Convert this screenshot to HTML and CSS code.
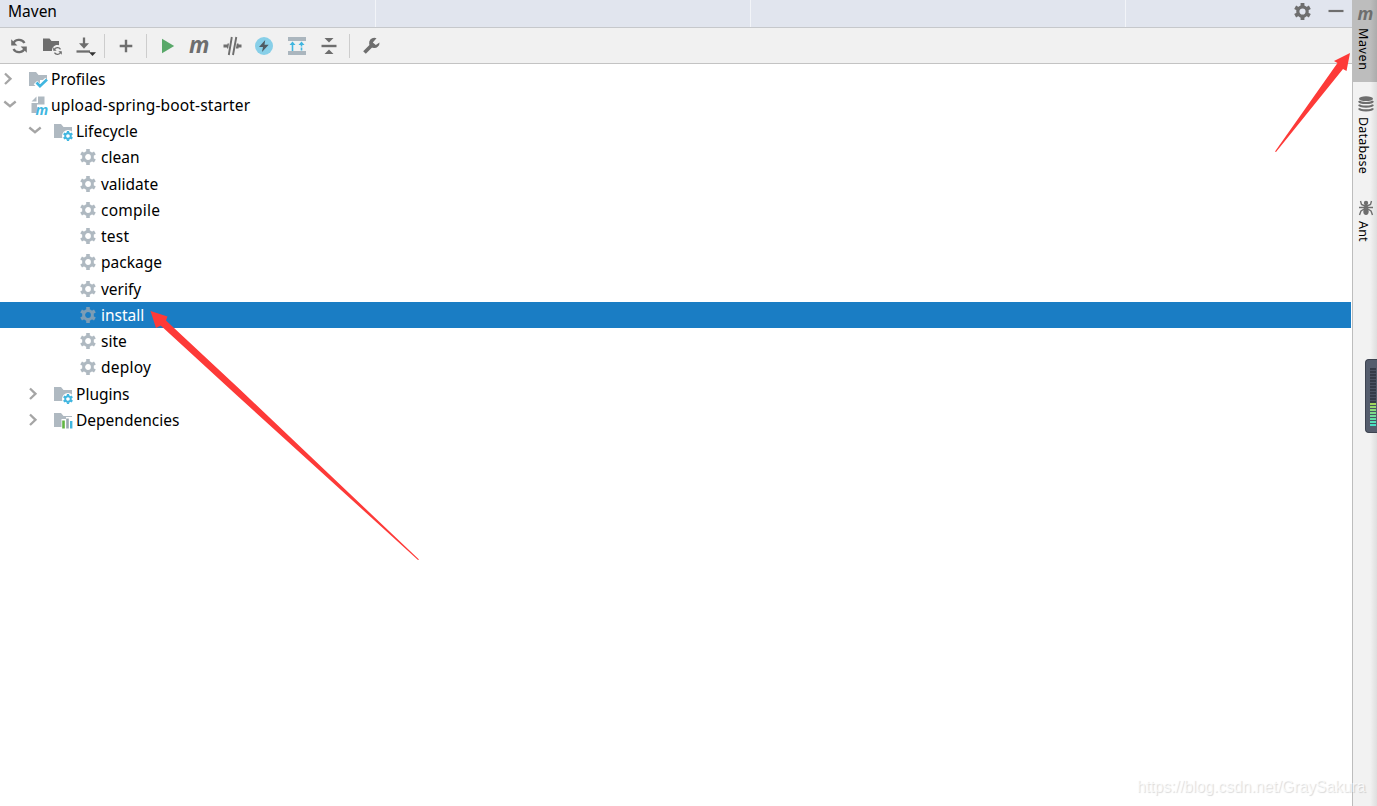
FILE: index.html
```html
<!DOCTYPE html>
<html lang="en">
<head>
    <meta charset="UTF-8">
    <meta name="viewport" content="width=device-width, initial-scale=1.0">
    <title>Maven</title>
    <link rel="stylesheet" href="styles.css">
</head>
<body>
    <!-- Shared icons -->
    <svg class="sprite" width="0" height="0">
        <symbol id="gear" viewBox="0 0 16 16">
            <circle cx="8" cy="8" r="4.4" fill="none" stroke="currentColor" stroke-width="3"/>
            <path d="M8 0v3M8 13v3M1.1 4l2.6 1.5M12.3 10.5l2.6 1.5M14.9 4l-2.6 1.5M3.7 10.5L1.1 12" stroke="currentColor" stroke-width="3.6"/>
        </symbol>
        <symbol id="folder" viewBox="0 0 20 20">
            <path d="M1 3h7l2.5 3H19v5h-7v6H1z" fill="currentColor"/>
        </symbol>
        <symbol id="right" viewBox="0 0 20 20">
            <path d="M5 4.5l5.5 5.3L5 15" fill="none" stroke="currentColor" stroke-width="2.3"/>
        </symbol>
        <symbol id="down" viewBox="0 0 20 20">
            <path d="M4.3 6.5l5.7 4.7 5.7-4.7" fill="none" stroke="currentColor" stroke-width="2.3"/>
        </symbol>
        <symbol id="sync" viewBox="0 0 20 20">
            <path d="M4 8.3A6.3 6.3 0 0 1 15.5 7M16 11.7A6.3 6.3 0 0 1 4.5 13" fill="none" stroke="currentColor" stroke-width="2.3"/>
            <path d="M2.2 3.2v6.2h6.2zM17.8 16.8v-6.2h-6.2z" fill="currentColor"/>
        </symbol>
    </svg>

    <div class="window">
        <div class="main">
            <div class="titlebar">
                <div class="title-part">Maven</div>
                <div class="title-part"></div>
                <div class="title-part"></div>
                <div class="title-part title-actions">
                    <svg width="17" height="17"><use href="#gear"/></svg>
                    <svg width="16" height="16"><path d="M0.5 8h15" stroke="currentColor" stroke-width="2.2"/></svg>
                </div>
            </div>

            <div class="toolbar">
                <div class="group group-first">
                    <svg class="icon"><use href="#sync"/></svg>
                    <svg class="icon" viewBox="0 0 20 20">
                        <path d="M1 2.5h6.5l2 2.5H17v4.3c-4-1-7 1.7-7 5.7H1z" fill="currentColor"/>
                        <use href="#sync" x="10" y="9.5" width="11" height="11"/>
                    </svg>
                    <svg class="icon" viewBox="0 0 20 20">
                        <path d="M9 1.5v8" stroke="currentColor" stroke-width="2.3"/>
                        <path d="M4 7.2h10L9 12.7z" fill="currentColor"/>
                        <path d="M1.5 15.5H15" stroke="currentColor" stroke-width="2.3"/>
                        <path d="M14 16.2h7L17.5 20z" fill="#333"/>
                    </svg>
                </div>
                <div class="separator sep-first"></div>
                <svg class="icon" viewBox="0 0 20 20"><path d="M10 3.7v12.6M3.7 10h12.6" stroke="currentColor" stroke-width="2.4"/></svg>
                <div class="separator sep-run"></div>
                <div class="group group-run">
                    <svg class="icon run" viewBox="0 0 20 20"><path d="M4 2.8v14.4L16.2 10z" fill="currentColor"/></svg>
                    <svg class="icon" viewBox="0 0 20 20"><text class="m-icon" x="-1" y="17" font-size="22.5">m</text></svg>
                    <svg class="icon" viewBox="0 0 20 20">
                        <path d="M0.5 10H7M12 10h6.5" stroke="currentColor" stroke-width="3"/>
                        <path d="M4.5 7.5h3v5H4zM13 7.5h2.5v5H12z" fill="currentColor"/>
                        <path d="M8.8 1l-3 18M13.3 1L10 19" stroke="#f1f1f1" stroke-width="3.4"/>
                        <path d="M8.8 1l-3 18M13.3 1L10 19" stroke="currentColor" stroke-width="1.9"/>
                    </svg>
                    <svg class="icon" viewBox="0 0 20 20">
                        <circle cx="9" cy="10" r="9" fill="#87cfe8"/>
                        <path d="M10.2 4L4 10.900h4L7 16l6.700-7.300H9.500z" fill="#4f5b62"/>
                    </svg>
                    <svg class="icon" viewBox="0 0 20 20">
                        <path d="M1 3h18M1 17h18" stroke="#abb6be" stroke-width="3.8"/>
                        <path d="M5.5 7.5V15" stroke="#40b6e0" stroke-width="1.6"/>
                        <path d="M14.5 7.5V15" stroke="#40b6e0" stroke-width="1.6" stroke-dasharray="3 1"/>
                        <path d="M2.5 9l3-3.500 3 3.500zM11.500 9l3-3.500 3 3.500z" fill="#40b6e0"/>
                    </svg>
                    <svg class="icon" viewBox="0 0 20 20">
                        <path d="M2.5 10h15" stroke="currentColor" stroke-width="2.4"/>
                        <path d="M5.5 2h9L10 6.5zM5.5 18h9L10 13.5z" fill="currentColor"/>
                    </svg>
                </div>
                <div class="separator sep-settings"></div>
                <svg class="icon" viewBox="0 0 20 20">
                    <path d="M3.5 16.5L12 8" stroke="currentColor" stroke-width="3.8"/>
                    <path d="M15.5 2.2a5.2 5.2 0 1 0 3 4.3L14.8 9l-3-2.500z" fill="currentColor"/>
                </svg>
            </div>

            <div class="tree">
                <div class="row">
                    <svg class="arrow"><use href="#right"/></svg>
                    <svg class="node" viewBox="0 0 20 20">
                        <use href="#folder"/>
                        <path d="M7.5 13.5l4 4L19 10.5" fill="none" stroke="#fff" stroke-width="5"/>
                        <path d="M8.5 13.5l3.500 3.700 7-6.700" fill="none" stroke="#40b6e0" stroke-width="2.7"/>
                    </svg>
                    <span>Profiles</span>
                </div>
                <div class="row">
                    <svg class="arrow"><use href="#down"/></svg>
                    <svg class="node" viewBox="0 0 20 20">
                        <path d="M8.5 1.5v5h-5zM10 1.5h6.500v8H9v8.500H3.500V8H10z" fill="currentColor"/>
                        <text class="m-icon m-blue" x="7.5" y="19.5" font-size="14">m</text>
                    </svg>
                    <span class="project">upload-spring-boot-starter</span>
                </div>
                <div class="row level-1">
                    <svg class="arrow"><use href="#down"/></svg>
                    <svg class="node" viewBox="0 0 20 20">
                        <use href="#folder"/>
                        <circle cx="15" cy="15" r="6" fill="#fff"/>
                        <use class="blue" href="#gear" x="10" y="10" width="10" height="10"/>
                    </svg>
                    <span>Lifecycle</span>
                </div>
                <div class="row level-2"><svg class="node" viewBox="-2 -2 20 20"><use href="#gear" width="16" height="16"/></svg><span>clean</span></div>
                <div class="row level-2"><svg class="node" viewBox="-2 -2 20 20"><use href="#gear" width="16" height="16"/></svg><span>validate</span></div>
                <div class="row level-2"><svg class="node" viewBox="-2 -2 20 20"><use href="#gear" width="16" height="16"/></svg><span class="wide">compile</span></div>
                <div class="row level-2"><svg class="node" viewBox="-2 -2 20 20"><use href="#gear" width="16" height="16"/></svg><span class="wide">test</span></div>
                <div class="row level-2"><svg class="node" viewBox="-2 -2 20 20"><use href="#gear" width="16" height="16"/></svg><span>package</span></div>
                <div class="row level-2"><svg class="node" viewBox="-2 -2 20 20"><use href="#gear" width="16" height="16"/></svg><span>verify</span></div>
                <div class="row level-2 selected"><svg class="node" viewBox="-2 -2 20 20"><use href="#gear" width="16" height="16"/></svg><span>install</span></div>
                <div class="row level-2"><svg class="node" viewBox="-2 -2 20 20"><use href="#gear" width="16" height="16"/></svg><span>site</span></div>
                <div class="row level-2"><svg class="node" viewBox="-2 -2 20 20"><use href="#gear" width="16" height="16"/></svg><span class="wide">deploy</span></div>
                <div class="row level-1">
                    <svg class="arrow"><use href="#right"/></svg>
                    <svg class="node" viewBox="0 0 20 20">
                        <use href="#folder"/>
                        <circle cx="15" cy="15" r="6" fill="#fff"/>
                        <use class="blue" href="#gear" x="10" y="10" width="10" height="10"/>
                    </svg>
                    <span>Plugins</span>
                </div>
                <div class="row level-1">
                    <svg class="arrow"><use href="#right"/></svg>
                    <svg class="node" viewBox="0 0 20 20">
                        <use href="#folder"/>
                        <path d="M8.5 9H13V7h7v11.500H8.500z" fill="#fff"/>
                        <path d="M10.500 10.500v8" stroke="#62b543" stroke-width="2.6"/>
                        <path d="M14.500 8.500v10" stroke="#9aa7b0" stroke-width="2.6"/>
                        <path d="M18.200 11v7.500" stroke="#40b6e0" stroke-width="2.4"/>
                    </svg>
                    <span>Dependencies</span>
                </div>
            </div>
        </div>

        <div class="stripe">
            <div class="tab tab-active">
                <svg class="tab-icon" viewBox="0 0 18 18"><text class="m-icon" x="0.5" y="15" font-size="17.5">m</text></svg>
                <span>Maven</span>
            </div>
            <div class="tab tab-database">
                <svg class="tab-icon" viewBox="0 0 18 18">
                    <ellipse cx="9" cy="3.7" rx="7" ry="2.4" fill="currentColor"/>
                    <path d="M2 6c1 2.600 13 2.600 14 0M2 9.700c1 2.600 13 2.600 14 0M2 13.400c1 2.600 13 2.600 14 0" fill="none" stroke="currentColor" stroke-width="2.1"/>
                </svg>
                <span>Database</span>
            </div>
            <div class="tab tab-ant">
                <svg class="tab-icon" viewBox="0 0 18 18">
                    <circle cx="9" cy="4" r="2.2" fill="currentColor"/>
                    <ellipse cx="9" cy="7.7" rx="1.8" ry="2" fill="currentColor"/>
                    <ellipse cx="9" cy="12.5" rx="2.7" ry="3.4" fill="currentColor"/>
                    <path d="M8 7L4.500 5.500 3.500 2M10 7l3.500-1.500 1-3.500M8 8.500H2M10 8.500h6M8 9.500l-4 2.500-1.500 4M10 9.500l4 2.500 1.500 4" fill="none" stroke="currentColor" stroke-width="1.4"/>
                </svg>
                <span>Ant</span>
            </div>
        </div>
    </div>

    <!-- Level meter docked over the right edge -->
    <div class="meter">
        <div class="meter-off"></div>
        <div class="meter-on"></div>
    </div>

    <!-- Pointers -->
    <svg class="pointers" viewBox="0 0 1377 806">
        <path d="M150.500 311L167.500 316.500 166 320.500 240 389.500 419 559.500 418 560 237 395.500 160.700 325.500 156 328z"/>
        <path d="M1350 53L1334 61 1337.500 63 1275 151.500 1276 152 1343 69 1346.500 71z"/>
    </svg>

    <div class="watermark">https://blog.csdn.net/GraySakura</div>
</body>
</html>
```
FILE: styles.css
```css
body {
    margin: 0;
    font-family: "Noto Sans", "Open Sans", sans-serif;
    font-size: 15.5px;
    color: #000;
    background-color: #fff;
    overflow: hidden;
}

svg {
    display: block;
    flex-shrink: 0;
}

.sprite {
    position: absolute;
}

.window {
    display: flex;
    height: 806px;
}

.main {
    flex: 1;
    min-width: 0;
}

.titlebar {
    display: flex;
    height: 27px;
    background-color: #e1e5ee;
    border-bottom: 1px solid #c6c8cb;
}

.title-part {
    box-sizing: border-box;
    width: 375px;
    padding-left: 8px;
    line-height: 23px;
    border-right: 1px solid #f2f4f8;
}

.title-part:first-child {
    width: 376px;
}

.title-actions {
    display: flex;
    flex: 1;
    justify-content: flex-end;
    align-items: center;
    gap: 17px;
    padding: 0 8px 5px 0;
    border-right: none;
    color: #6e6e6e;
}

.toolbar {
    display: flex;
    align-items: center;
    height: 35px;
    padding-left: 9px;
    background-color: #f1f1f1;
    border-bottom: 1px solid #c3c3c3;
    color: #6e6e6e;
}

.group {
    display: flex;
}

.group-first {
    gap: 13px;
}

.group-run {
    gap: 12.3px;
}

.icon {
    width: 20px;
    height: 20px;
    overflow: visible;
}

.run {
    color: #59a869;
}

.separator {
    width: 1px;
    height: 24px;
    background-color: #cdcdcd;
}

.sep-first {
    margin: 0 11px 0 9px;
}

.sep-run {
    margin: 0 11px 0 10px;
}

.sep-settings {
    margin: 0 11px 0 10px;
}

.m-icon {
    font-family: "Open Sans", sans-serif;
    font-weight: bold;
    font-style: italic;
    fill: currentColor;
}

.m-blue {
    fill: #40b6e0;
}

.tree {
    padding-top: 1.6px;
}

.row {
    display: flex;
    align-items: center;
    height: 26.26px;
}

.row span {
    margin-left: 3px;
    line-height: 24px;
    white-space: nowrap;
}

.row .project {
    letter-spacing: 0.17px;
}

.row .wide {
    letter-spacing: 0.25px;
}

.level-1 {
    padding-left: 25px;
}

.level-2 {
    padding-left: 78px;
}

.arrow {
    width: 20px;
    height: 20px;
    margin-right: 8px;
    color: #a5a5a5;
}

.node {
    width: 20px;
    height: 20px;
    color: #afb9c1;
    overflow: visible;
}

.blue {
    color: #40b6e0;
}

.selected {
    margin-right: 1px;
    background-color: #1a7dc4;
    color: #fff;
}

.selected .node {
    color: #7d9db5;
}

.stripe {
    box-sizing: border-box;
    width: 25px;
    background: linear-gradient(to right, #f2f2f2 17px, #dedede);
    border-left: 1px solid #bdbdbd;
    font-size: 12.5px;
    letter-spacing: 0.2px;
}

.tab {
    display: flex;
    flex-direction: column;
    align-items: flex-start;
}

.tab-active {
    height: 77px;
    padding-top: 5px;
    background: linear-gradient(to right, #bdbdbd 17px, #acacac);
    letter-spacing: 0.6px;
}

.tab-database {
    height: 91px;
    padding-top: 13px;
}

.tab-ant {
    padding-top: 13px;
}

.tab-icon {
    width: 18px;
    height: 18px;
    margin-left: 4px;
    color: #6e6e6e;
    letter-spacing: 0;
    overflow: visible;
}

.tab span {
    margin: 4px 0 0 2px;
    writing-mode: vertical-rl;
    line-height: 17px;
}

.tab-active span {
    margin-top: 5px;
}

.meter {
    position: absolute;
    left: 1365px;
    top: 359px;
    box-sizing: border-box;
    width: 12px;
    height: 74px;
    padding: 8px 0 0 4px;
    background-color: #555d6d;
    border: 1px solid #3d4350;
    border-right: none;
    border-radius: 4px 0 0 4px;
}

.meter-off,
.meter-on {
    width: 6px;
    height: 35px;
    background: repeating-linear-gradient(#353b48 0 2px, #4b5262 2px 3px);
}

.meter-on {
    height: 23px;
    background: repeating-linear-gradient(transparent 0 2px, #465463 2px 3px), linear-gradient(#a6d65a, #45e0c8);
}

.pointers {
    position: absolute;
    left: 0;
    top: 0;
    width: 1377px;
    height: 806px;
    fill: #fd3a38;
}

.watermark {
    position: absolute;
    left: 1137px;
    top: 777px;
    font-family: "Liberation Sans", Arial, sans-serif;
    font-size: 15.7px;
    line-height: 20px;
    white-space: nowrap;
    color: rgba(255, 255, 255, 0.7);
    text-shadow: 1px 1px 1px rgba(0, 0, 0, 0.15);
}
```
